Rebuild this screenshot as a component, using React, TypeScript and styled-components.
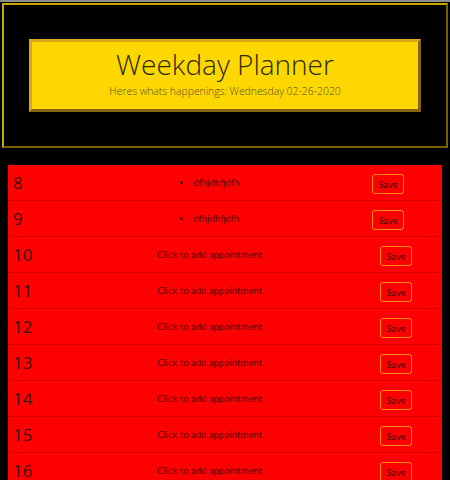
import React from "react";
import styled, { createGlobalStyle } from "styled-components";

const GlobalStyle = createGlobalStyle`
  html, body {
    margin: 0;
    padding: 0;
    background: #000;
  }
  body {
    border-top: 2px solid #8c8c8c;
    font-family: "Open Sans", "Noto Sans", sans-serif;
    overflow: hidden;
  }
`;

const Jumbotron = styled.header`
  margin: 1px 2px 0 2px;
  padding: 34px 25px 34px 25px;
  border: 2px outset #c9a900;
  background: #000;
`;

const TitleBox = styled.div`
  border: 3px outset #daa520;
  background: #ffd700;
  display: flex;
  flex-direction: column;
  align-items: center;
  padding: 3px 0 11px 0;
`;

const Title = styled.h1`
  margin: 0;
  font-weight: 300;
  font-size: 28px;
  line-height: 38px;
  color: #2b2b00;
`;

const Lead = styled.p`
  margin: 1px 0 0 0;
  font-weight: 300;
  font-size: 10.4px;
  line-height: 14px;
  color: #4f4f26;
`;

const Planner = styled.main`
  margin: 17px 8px 0 8px;
`;

const Row = styled.div`
  display: grid;
  grid-template-columns: 65px 1fr 101px;
  align-items: center;
  height: 35px;
  padding-left: 5px;
  background: #ff0000;
  border-bottom: 1px solid #d80000;
`;

const Hour = styled.div`
  font-size: 17px;
  color: #3a1010;
`;

const Slot = styled.div`
  font-family: "Lato", "Open Sans", sans-serif;
  font-size: 9.5px;
  color: #5a0000;
  text-align: center;
`;

const Notes = styled.ul`
  margin: 0;
  padding: 0;
  list-style-position: inside;
  text-align: center;
`;

const SaveCell = styled.div<{ $shift: number }>`
  padding-left: ${(p) => p.$shift}px;
`;

const SaveButton = styled.button`
  width: 32px;
  height: 20px;
  padding: 0;
  background: transparent;
  border: 1px solid #ff8c00;
  border-radius: 3px;
  font-family: "Lato", "Open Sans", sans-serif;
  font-size: 9.5px;
  color: #3a0000;
`;

const hours = [
  { hour: 8, note: "dfhjdhfjdfh" },
  { hour: 9, note: "dfhjdhfjdfh" },
  { hour: 10 },
  { hour: 11 },
  { hour: 12 },
  { hour: 13 },
  { hour: 14 },
  { hour: 15 },
  { hour: 16 },
];

export default function App() {
  return (
    <>
      <GlobalStyle />
      <Jumbotron>
        <TitleBox>
          <Title>Weekday Planner</Title>
          <Lead>Heres whats happenings: Wednesday 02-26-2020</Lead>
        </TitleBox>
      </Jumbotron>
      <Planner>
        {hours.map((item) => (
          <Row key={item.hour}>
            <Hour>{item.hour}</Hour>
            <Slot>
              {item.note ? (
                <Notes>
                  <li>{item.note}</li>
                </Notes>
              ) : (
                "Click to add appointment"
              )}
            </Slot>
            <SaveCell $shift={item.note ? 31 : 39}>
              <SaveButton>Save</SaveButton>
            </SaveCell>
          </Row>
        ))}
      </Planner>
    </>
  );
}
